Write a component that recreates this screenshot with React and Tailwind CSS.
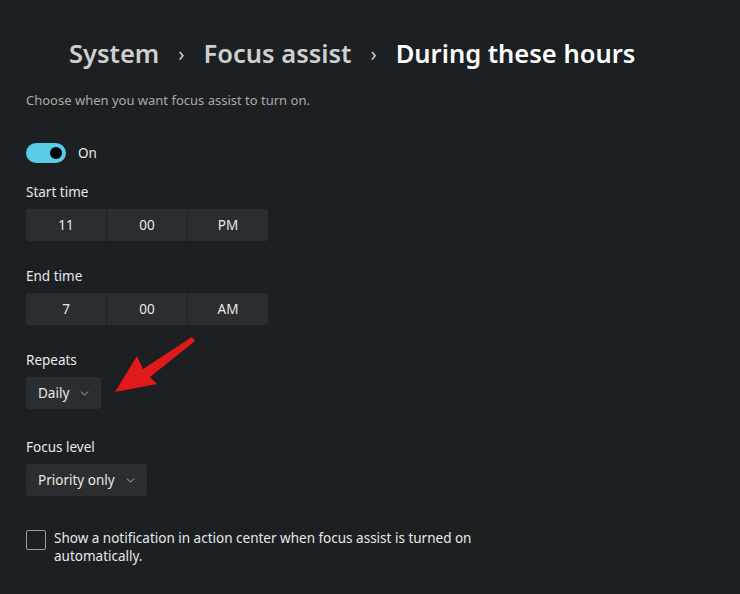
import { FiChevronDown } from "react-icons/fi";

const TimePicker = ({ parts }) => (
  <div className="flex w-[242px] h-8 bg-[#2b2e31] rounded-[3px] overflow-hidden">
    {parts.map((p, i) => (
      <div
        key={i}
        className={`flex-1 flex items-center justify-center text-[13.5px] text-[#e8e8e8] ${
          i > 0 ? "border-l border-[#1f2225]" : ""
        }`}
      >
        {p}
      </div>
    ))}
  </div>
);

const Dropdown = ({ value }) => (
  <div className="inline-flex items-center h-8 pl-3 pr-[10px] gap-[9px] bg-[#2b2e31] rounded-[3px] text-[13.5px] text-[#e8e8e8]">
    <span>{value}</span>
    <FiChevronDown className="w-[13px] h-[13px] text-[#c8c8c8]" strokeWidth={1.5} />
  </div>
);

export default function App() {
  return (
    <div
      className="relative w-[740px] h-[594px] overflow-hidden bg-[#1d2023] text-[#e8e8e8]"
      style={{ fontFamily: '"Noto Sans", "Open Sans", sans-serif' }}
    >
      <div className="pl-[26px] pt-[35px]">
        {/* Breadcrumb */}
        <div className="flex items-center pl-[43px] h-[38px] text-[25.5px] font-semibold leading-none">
          <span className="text-[#cfcfcf]">System</span>
          <span className="mx-[19px] text-[20px] font-normal text-[#cfcfcf]">›</span>
          <span className="text-[#cfcfcf]">Focus assist</span>
          <span className="mx-[19px] text-[20px] font-normal text-[#cfcfcf]">›</span>
          <span className="text-white">During these hours</span>
        </div>

        <p className="mt-[18px] text-[13px] text-[#a9a9a9] leading-[18px]">
          Choose when you want focus assist to turn on.
        </p>

        {/* Toggle */}
        <div className="mt-[34px] flex items-center gap-3">
          <div className="w-10 h-5 rounded-full bg-[#58cbe6] flex items-center justify-end pr-[4px]">
            <div className="w-3 h-3 rounded-full bg-black" />
          </div>
          <span className="text-[13.5px]">On</span>
        </div>

        <div className="mt-[20px] text-[13.5px] leading-[18px]">Start time</div>
        <div className="mt-[8px]">
          <TimePicker parts={["11", "00", "PM"]} />
        </div>

        <div className="mt-[26px] text-[13.5px] leading-[18px]">End time</div>
        <div className="mt-[8px]">
          <TimePicker parts={["7", "00", "AM"]} />
        </div>

        <div className="mt-[26px] text-[13.5px] leading-[18px]">Repeats</div>
        <div className="mt-[8px]">
          <Dropdown value="Daily" />
        </div>

        <div className="mt-[29px] text-[13.5px] leading-[18px]">Focus level</div>
        <div className="mt-[8px]">
          <Dropdown value="Priority only" />
        </div>

        <div className="mt-[34px] flex items-start gap-2">
          <div className="w-5 h-5 border border-[#9a9a9a] rounded-[2px] shrink-0" />
          <p className="w-[430px] text-[13.5px] leading-[18px] -mt-[1px]">
            Show a notification in action center when focus assist is turned on
            automatically.
          </p>
        </div>
      </div>

      {/* Red arrow annotation */}
      <svg
        className="absolute left-0 top-0 pointer-events-none"
        width="740"
        height="594"
        viewBox="0 0 740 594"
      >
        <polygon
          points="115,392 137,356 143,369 192,337 195,341 150,377 157,384"
          fill="#e0191a"
        />
      </svg>
    </div>
  );
}
